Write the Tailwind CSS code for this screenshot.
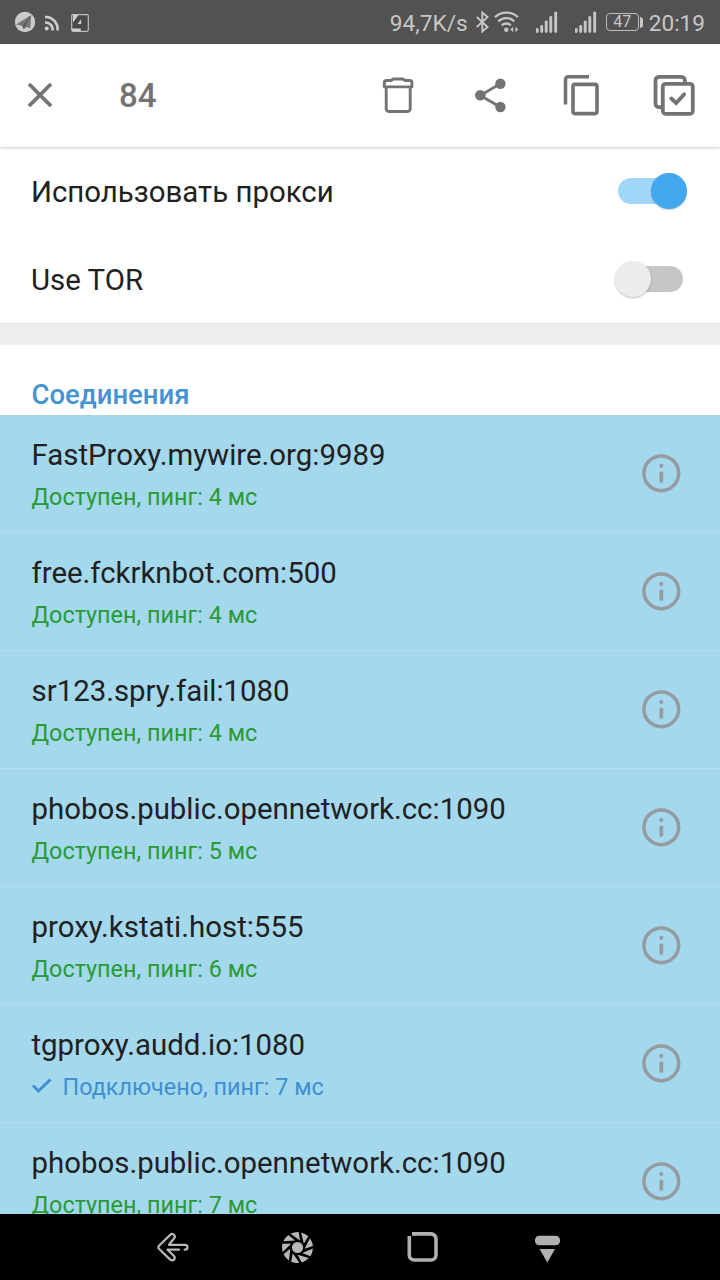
<!DOCTYPE html>
<html lang="ru">
<head>
    <meta charset="UTF-8">
    <meta name="viewport" content="width=device-width, initial-scale=1.0">
    <title>Прокси</title>
    <script src="https://cdn.jsdelivr.net/npm/@tailwindcss/browser@4"></script>
</head>
<body class="bg-white font-['Roboto',sans-serif] text-[#212121]">
    <svg class="hidden">
        <symbol id="info" viewBox="0 0 40 40">
            <circle cx="20.3" cy="20.3" r="17.4" fill="none" stroke="#959b9e" stroke-width="3.5"/>
            <circle cx="20.3" cy="12.9" r="2.1" fill="#959b9e"/>
            <path d="M20.3 20.3v7.6" stroke="#959b9e" stroke-width="3.8" stroke-linecap="round"/>
        </symbol>
        <symbol id="signal" viewBox="0 0 22 22">
            <path d="M1.2 18.5v2M5.7 15.5v5M10.2 11v9.5M14.8 6.5v14M19.7 2v18.5" stroke="#c6c6c6" stroke-width="2.9" stroke-linecap="round"/>
        </symbol>
    </svg>

    <div class="flex h-screen w-[720px] flex-col overflow-hidden">
        <!-- Status bar -->
        <div class="flex h-11 shrink-0 items-center bg-[#525252] pr-[15px] pl-[14px] text-[#c6c6c6]">
            <svg class="h-[22px] w-[22px]" viewBox="0 0 22 22">
                <circle cx="11" cy="11" r="10.2" fill="#cbcbcb"/>
                <path d="M2 13.5 17.2 4 16.3 17.3 12 15.9 9.8 18.2 8.2 14.7Z" fill="#777"/>
                <path d="M8.2 14.7 17.2 4 9.8 18.2Z" fill="#5d5d5d"/>
            </svg>
            <svg class="mt-0.5 ml-2 h-[18px] w-4" viewBox="0 0 16 18" fill="none" stroke="#d0d0d0" stroke-width="2.6">
                <path d="M1 3a12 12 0 0 1 12.5 13.5M1 8.5a7 7 0 0 1 7.5 8"/>
                <circle cx="2.7" cy="14.6" r="2" fill="#d0d0d0" stroke="none"/>
            </svg>
            <svg class="mt-px ml-[11px] h-[18px] w-[18px]" viewBox="0 0 18 18">
                <rect x=".7" y=".7" width="16.6" height="16.6" rx="1.2" fill="#4a4a4a" stroke="#bdbdbd" stroke-width="1.2"/>
                <path d="M1 1H7.5L2 8.5V1ZM1 14.5H9.8V17H1Z" fill="#d0d0d0"/>
                <path d="M10.2 5V10H6.5Z" fill="#d0d0d0"/>
            </svg>

            <span class="mt-1 ml-auto text-[22.7px] leading-none">94,7K/s</span>
            <svg class="ml-2 h-[22px] w-[13px]" viewBox="0 0 13 22" fill="none" stroke="#c6c6c6" stroke-width="1.9">
                <path d="M.8 6 11.6 16 6.3 20.5V1.5L11.6 6 .8 16"/>
            </svg>
            <svg class="ml-[5px] h-[22px] w-[25px]" viewBox="0 0 25 22" fill="none" stroke="#c6c6c6" stroke-width="2.3">
                <path d="M.9 6.2a16.5 16.5 0 0 1 23 0M4.3 10.3a11.5 11.5 0 0 1 16 0M7.8 14.3a6.5 6.5 0 0 1 9 0"/>
                <circle cx="12.3" cy="18.7" r="2.2" fill="#c6c6c6" stroke="none"/>
                <path d="M19.2 15.8v5.5L16.3 18.5ZM21.4 15.8v5.5L24.3 18.5Z" fill="#c6c6c6" stroke="none"/>
            </svg>
            <svg class="ml-[17px] h-[22px] w-[22px]"><use href="#signal"/></svg>
            <svg class="ml-[17px] h-[22px] w-[22px]"><use href="#signal"/></svg>
            <div class="ml-[9px] flex h-[18px] w-[33px] items-center justify-center rounded-[4px] border border-[#bdbdbd] text-[16px] leading-none">47</div>
            <div class="ml-px h-[11px] w-[3px] rounded-r-sm bg-[#c6c6c6]"></div>
            <span class="mt-1 ml-1.5 text-[22.6px] leading-none">20:19</span>
        </div>

        <!-- Action bar -->
        <div class="relative flex h-[103px] shrink-0 items-center bg-white shadow-[0_1px_3px_rgba(0,0,0,0.22)]">
            <svg class="mt-[-1px] ml-[27px] h-[26px] w-[26px]" viewBox="0 0 26 26" stroke="#737373" stroke-width="3.8">
                <path d="M2 2 24 24M24 2 2 24"/>
            </svg>
            <span class="ml-[66px] text-[33px] font-medium leading-none text-[#737373]">84</span>
            <div class="ml-auto flex text-[#737373]">
                <svg class="h-[103px] w-[92px]" viewBox="352 44 92 103" fill="none" stroke="currentColor" stroke-width="2.9">
                    <path d="M386.2 87v22a2.5 2.5 0 0 0 2.5 2.5h19a2.5 2.5 0 0 0 2.5-2.5V87M384.3 86.9v-4.2a2.2 2.2 0 0 1 2.2-2.2h4.5l2.2-1.5h9.8l2.2 1.5h4.5a2.2 2.2 0 0 1 2.2 2.2v4.2Z" stroke-linejoin="round"/>
                </svg>
                <svg class="h-[103px] w-[92px]" viewBox="444 44 92 103" fill="currentColor" stroke="currentColor" stroke-width="2.8">
                    <path d="M500.3 83.8 480.3 95.4 500.3 107" fill="none"/>
                    <g stroke="none">
                        <circle cx="480.3" cy="95.3" r="5.3"/>
                        <circle cx="500.4" cy="83.8" r="5.2"/>
                        <circle cx="500.4" cy="107" r="5.2"/>
                    </g>
                </svg>
                <svg class="h-[103px] w-[92px]" viewBox="536 44 92 103" fill="none" stroke="currentColor" stroke-width="3.6">
                    <path d="M589 76.8H568.3a2.8 2.8 0 0 0-2.8 2.8V104.5"/>
                    <rect x="573" y="84.4" width="24" height="29.2" rx="2"/>
                </svg>
                <svg class="h-[103px] w-[92px]" viewBox="628 44 92 103" fill="none" stroke="currentColor" stroke-width="3.8">
                    <path d="M661.5 107.2h-2.5a3.5 3.5 0 0 1-3.5-3.5V80.3a3.5 3.5 0 0 1 3.5-3.5h22.4a3.5 3.5 0 0 1 3.5 3.5v3"/>
                    <rect x="662.8" y="83.8" width="30" height="30" rx="2.8"/>
                    <path d="M671.3 98.5 676.2 103.1 684.2 94.3" stroke-linecap="round"/>
                </svg>
            </div>
        </div>

        <!-- Settings -->
        <div class="flex h-[88px] shrink-0 items-center justify-between pr-[33px] pl-[31px]">
            <span class="mt-1 text-[29.4px] leading-none">Использовать прокси</span>
            <div class="relative mt-[-1px] h-9 w-[69px]">
                <div class="mt-[5px] h-[26px] w-[64px] rounded-full bg-[#a0d6fa]"></div>
                <div class="absolute top-0 right-0 h-9 w-9 rounded-full bg-[#42a7ec] shadow-[0_1px_2px_rgba(0,0,0,0.2)]"></div>
            </div>
        </div>
        <div class="flex h-[88px] shrink-0 items-center justify-between pr-[37px] pl-[31px]">
            <span class="mt-1 text-[29.4px] leading-none">Use TOR</span>
            <div class="relative h-9 w-[69px]">
                <div class="mt-[5px] ml-[5px] h-[26px] w-[64px] rounded-full bg-[#c6c6c6]"></div>
                <div class="absolute top-0 left-px h-9 w-9 rounded-full bg-[#ececec] shadow-[0_1px_2px_rgba(0,0,0,0.25)]"></div>
            </div>
        </div>
        <div class="h-[22px] shrink-0 border-t border-[#e2e2e2] bg-[#efefef]"></div>

        <!-- Connections -->
        <h2 class="h-[70px] shrink-0 pt-[35px] pl-[31.5px] text-[27.5px] leading-[30px] font-medium text-[#4493d2]">Соединения</h2>
        <div id="proxies" class="min-h-0 flex-1 overflow-hidden bg-[#a4d8ed]"></div>

        <!-- Navigation bar -->
        <div class="flex h-[66px] shrink-0 justify-center bg-black">
            <svg class="h-[66px] w-[125px]" viewBox="110 1214 125 66" fill="none" stroke="#b8b8b8" stroke-width="2.2" stroke-linecap="round" stroke-linejoin="round">
                <path d="M184.7 1249.7H185a2.4 2.4 0 0 0 0-4.9H169L174 1238.5a2.4 2.4 0 0 0-3.8-3.6L159 1245.8a2 2 0 0 0 0 2.9L170.2 1259.6a2.4 2.4 0 0 0 3.8-3.6L167.500 1249.7H179"/>
            </svg>
            <svg class="h-[66px] w-[125px]" viewBox="235 1214 125 66" fill="#b8b8b8">
                <circle cx="297.5" cy="1247.5" r="5.6"/>
                <g id="shutter"></g>
            </svg>
            <svg class="h-[66px] w-[125px]" viewBox="360 1214 125 66" fill="none" stroke="#b0b0b0" stroke-width="3.6">
                <path d="M412 1233.9H431a5 5 0 0 1 5 5V1255a5 5 0 0 1-5 5H414.3a5 5 0 0 1-5-5V1236"/>
            </svg>
            <svg class="h-[66px] w-[125px]" viewBox="485 1214 125 66" fill="#b0b0b0">
                <rect x="535" y="1235.7" width="25" height="9.6" rx="4.3"/>
                <path d="M539.5 1249H555L547.3 1262.5Z"/>
            </svg>
        </div>
    </div>

    <script>
        const proxies = [
            { host: 'FastProxy.mywire.org:9989', ping: 4 },
            { host: 'free.fckrknbot.com:500', ping: 4 },
            { host: 'sr123.spry.fail:1080', ping: 4 },
            { host: 'phobos.public.opennetwork.cc:1090', ping: 5 },
            { host: 'proxy.kstati.host:555', ping: 6 },
            { host: 'tgproxy.audd.io:1080', ping: 7, connected: true },
            { host: 'phobos.public.opennetwork.cc:1090', ping: 7 }
        ];

        document.getElementById('proxies').innerHTML = proxies.map(p => `
            <div class="flex h-[118px] items-center justify-between border-b border-[#b5dce9] pr-[39px] pl-[31.5px]">
                <div class="pt-1">
                    <div class="text-[29.4px] leading-[42px]">${p.host}</div>
                    ${p.connected
                        ? `<div class="flex items-center text-[23.4px] leading-[42px] text-[#3f8fd2]">
                            <svg class="mr-[11px] mb-0.5 h-4 w-5" viewBox="0 0 20 16" fill="none" stroke="currentColor" stroke-width="3"><path d="M1 7.5 6.5 13 18.5 1.5"/></svg>
                            Подключено, пинг: ${p.ping} мс
                        </div>`
                        : `<div class="text-[23.4px] leading-[42px] text-[#299a35]">Доступен, пинг: ${p.ping} мс</div>`}
                </div>
                <svg class="mt-[-1px] h-10 w-10"><use href="#info"/></svg>
            </div>`).join('');

        // nine skewed blades around the shutter centre
        let blades = '';
        for (let i = 0; i < 9; i++) {
            blades += `<path d="M290.6 1233.7A15.5 15.5 0 0 1 298.6 1232L300 1240.6Z" transform="rotate(${i * 40} 297.5 1247.5)"/>`;
        }
        document.getElementById('shutter').innerHTML = blades;
    </script>
</body>
</html>
